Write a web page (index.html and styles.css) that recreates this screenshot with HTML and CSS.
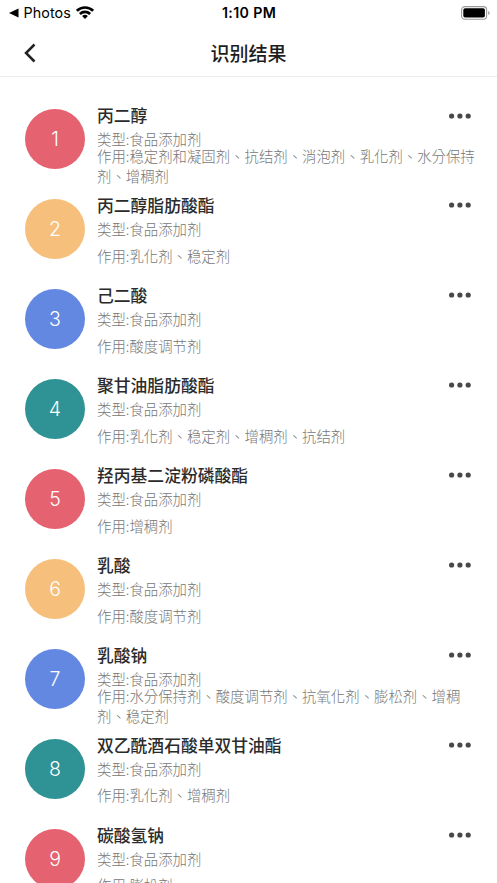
FILE: index.html
```html
<!DOCTYPE html>
<html lang="zh-CN">
<head>
<meta charset="utf-8">
<title>识别结果</title>
<link rel="stylesheet" href="styles.css">
</head>
<body>
<header class="status">
  <div class="status-left">
    <svg class="tri" viewBox="0 0 10 10"><path d="M0 5 9.5.5v9z"/></svg>
    <span class="photos">Photos</span>
    <svg class="wifi" viewBox="0 0 18 13"><g fill="none" stroke="#000" stroke-width="2.7"><path d="M.9 4.8a11.6 11.6 0 0 1 16.2 0"/><path d="M3.9 8a7.3 7.3 0 0 1 10.2 0"/></g><path d="M9 13 6.1 10.1a4.2 4.2 0 0 1 5.8 0z"/></svg>
  </div>
  <span class="clock">1:10 PM</span>
  <div class="status-right">
    <svg class="battery" viewBox="0 0 29 14"><rect x=".6" y=".6" width="25" height="12.6" rx="3.2" fill="none" stroke="#999" stroke-width="1.1"/><rect x="2.3" y="2.3" width="21.6" height="9.2" rx="1.8"/><path d="M27.3 5v4q1.3-.6 1.3-2t-1.3-2" fill="#888"/></svg>
  </div>
</header>
<nav class="nav">
  <svg class="back" viewBox="0 0 12 20"><path d="M10.5 1.5 2 10l8.500 8.500" fill="none" stroke="#222" stroke-width="2.500"/></svg>
  <h1 class="title">识别结果</h1>
</nav>
<main class="list">
  <article class="row"><div class="badge red">1</div><div class="info"><h2 class="name">丙二醇</h2><p class="type">类型:食品添加剂</p><div class="effect"><p lang="zh-TW">作用:稳定剂和凝固剂、抗结剂、消泡剂、乳化剂、水分保持剂、增稠剂</p></div></div><svg class="more" viewBox="0 0 22 6"><circle cx="2.600" cy="3" r="2.600"/><circle cx="10.900" cy="3" r="2.600"/><circle cx="19.200" cy="3" r="2.600"/></svg></article>
  <article class="row"><div class="badge orange">2</div><div class="info"><h2 class="name">丙二醇脂肪酸酯</h2><p class="type">类型:食品添加剂</p><div class="effect"><p lang="zh-TW">作用:乳化剂、稳定剂</p></div></div><svg class="more" viewBox="0 0 22 6"><circle cx="2.600" cy="3" r="2.600"/><circle cx="10.900" cy="3" r="2.600"/><circle cx="19.200" cy="3" r="2.600"/></svg></article>
  <article class="row"><div class="badge blue">3</div><div class="info"><h2 class="name">己二酸</h2><p class="type">类型:食品添加剂</p><div class="effect"><p lang="zh-TW">作用:酸度调节剂</p></div></div><svg class="more" viewBox="0 0 22 6"><circle cx="2.600" cy="3" r="2.600"/><circle cx="10.900" cy="3" r="2.600"/><circle cx="19.200" cy="3" r="2.600"/></svg></article>
  <article class="row"><div class="badge teal">4</div><div class="info"><h2 class="name">聚甘油脂肪酸酯</h2><p class="type">类型:食品添加剂</p><div class="effect"><p lang="zh-TW">作用:乳化剂、稳定剂、增稠剂、抗结剂</p></div></div><svg class="more" viewBox="0 0 22 6"><circle cx="2.600" cy="3" r="2.600"/><circle cx="10.900" cy="3" r="2.600"/><circle cx="19.200" cy="3" r="2.600"/></svg></article>
  <article class="row"><div class="badge red">5</div><div class="info"><h2 class="name">羟丙基二淀粉磷酸酯</h2><p class="type">类型:食品添加剂</p><div class="effect"><p lang="zh-TW">作用:增稠剂</p></div></div><svg class="more" viewBox="0 0 22 6"><circle cx="2.600" cy="3" r="2.600"/><circle cx="10.900" cy="3" r="2.600"/><circle cx="19.200" cy="3" r="2.600"/></svg></article>
  <article class="row"><div class="badge orange">6</div><div class="info"><h2 class="name">乳酸</h2><p class="type">类型:食品添加剂</p><div class="effect"><p lang="zh-TW">作用:酸度调节剂</p></div></div><svg class="more" viewBox="0 0 22 6"><circle cx="2.600" cy="3" r="2.600"/><circle cx="10.900" cy="3" r="2.600"/><circle cx="19.200" cy="3" r="2.600"/></svg></article>
  <article class="row"><div class="badge blue">7</div><div class="info"><h2 class="name">乳酸钠</h2><p class="type">类型:食品添加剂</p><div class="effect"><p lang="zh-TW">作用:水分保持剂、酸度调节剂、抗氧化剂、膨松剂、增稠剂、稳定剂</p></div></div><svg class="more" viewBox="0 0 22 6"><circle cx="2.600" cy="3" r="2.600"/><circle cx="10.900" cy="3" r="2.600"/><circle cx="19.200" cy="3" r="2.600"/></svg></article>
  <article class="row"><div class="badge teal">8</div><div class="info"><h2 class="name">双乙酰酒石酸单双甘油酯</h2><p class="type">类型:食品添加剂</p><div class="effect"><p lang="zh-TW">作用:乳化剂、增稠剂</p></div></div><svg class="more" viewBox="0 0 22 6"><circle cx="2.600" cy="3" r="2.600"/><circle cx="10.900" cy="3" r="2.600"/><circle cx="19.200" cy="3" r="2.600"/></svg></article>
  <article class="row"><div class="badge red">9</div><div class="info"><h2 class="name">碳酸氢钠</h2><p class="type">类型:食品添加剂</p><div class="effect"><p lang="zh-TW">作用:膨松剂</p></div></div><svg class="more" viewBox="0 0 22 6"><circle cx="2.600" cy="3" r="2.600"/><circle cx="10.900" cy="3" r="2.600"/><circle cx="19.200" cy="3" r="2.600"/></svg></article>
</main>
</body>
</html>
```
FILE: styles.css
```css
* { box-sizing: border-box; margin: 0; padding: 0; }
html, body { height: 883px; overflow: hidden; background: #fff; }
body { font-family: Inter, "Noto Sans CJK SC", sans-serif; color: #2b2b2b; }
svg { display: block; flex: none; }
.status { display: grid; grid-template-columns: 1fr auto 1fr; height: 26px; align-items: center; padding: 0 7px 0 9px; color: #000; }
.status-left { display: flex; align-items: center; }
.tri { width: 10px; height: 10px; }
.photos { font-size: 14.3px; line-height: 20px; letter-spacing: .1px; margin-left: 4.5px; }
.wifi { width: 18px; height: 13px; margin-left: 5.5px; margin-top: -2px; }
.clock { font-size: 14.2px; font-weight: 600; line-height: 20px; letter-spacing: .35px; margin-left: -1px; }
.status-right { display: flex; justify-content: flex-end; }
.battery { width: 29px; height: 14px; margin-top: -1px; }
.nav { height: 51px; display: grid; grid-template-columns: 36px 1fr 36px; align-items: center; border-bottom: 1px solid #ebebeb; }
.back { width: 12px; height: 20px; margin-left: 24px; margin-top: 3px; }
.title { font-family: "Noto Sans CJK SC", sans-serif; font-size: 19px; font-weight: 500; line-height: 28px; text-align: center; color: #1d1d1d; padding-top: 3px; }
.list { padding: 27px 0 0 25px; }
.row { display: flex; height: 89.93px; }
.badge { width: 60px; height: 60px; margin-top: 5.3px; border-radius: 50%; flex: none; display: flex; align-items: center; justify-content: center; color: #fff; font-size: 19.5px; font-weight: 300; line-height: 24px; }
.red { background: #e56270; }
.orange { background: #f6c07c; }
.blue { background: #6388e2; }
.teal { background: #2f9295; }
.info { width: 380px; margin: -.6px 0 0 12px; flex: none; }
.name { font-family: "Noto Sans CJK SC", sans-serif; font-size: 16.8px; font-weight: 500; line-height: 24px; height: 24px; }
.type, .effect { font-family: "Noto Sans CJK SC", sans-serif; font-size: 14.4px; font-weight: 300; color: #777; }
.effect { font-family: "Noto Sans CJK TC", "Noto Sans CJK SC", sans-serif; }
.type { line-height: 24px; height: 24px; }
.effect { height: 29.2px; display: flex; align-items: center; line-height: 20px; }
.more { width: 22px; height: 6px; margin: 8.500px 0 0 -28.500px; fill: #484848; }
```
